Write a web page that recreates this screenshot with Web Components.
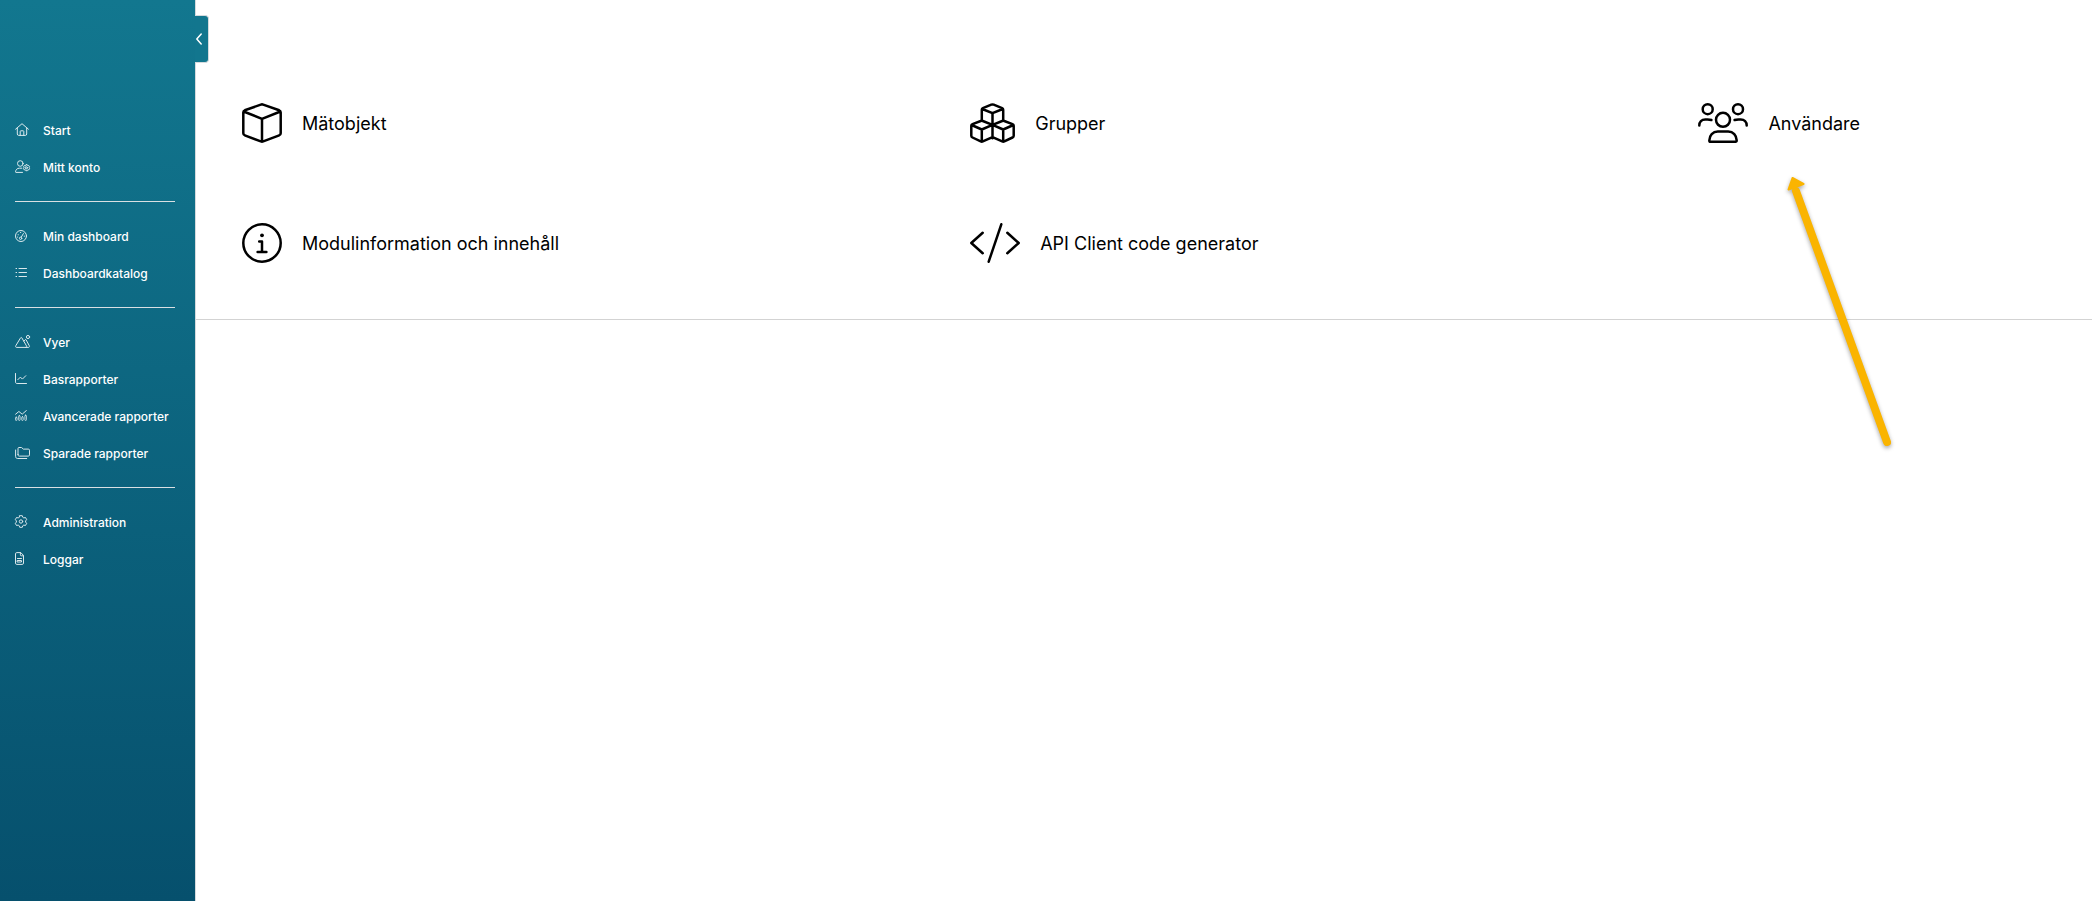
<!DOCTYPE html>
<html lang="sv">
<head>
<meta charset="utf-8">
<meta name="viewport" content="width=device-width, initial-scale=1">
<title>Administration</title>
<style>
  body {
    margin: 0;
    font-family: Inter, "Liberation Sans", sans-serif;
    color: #000;
    background: #fff;
  }
</style>
</head>
<body>
<admin-app></admin-app>

<script>
// width, height, stroke width, markup
const ICONS = {
  home: [14, 13, 1, '<path d="M.6 6.2 7 .7l6.400 5.500M2.300 5v6c0 .9.500 1.400 1.400 1.400h6.600c.9 0 1.400-.5 1.400-1.400V5M5.200 12.200V8.400c0-.4.200-.6.600-.6h2.400c.4 0 .6.200.6.600v3.800"/>'],
  account: [15, 13, 1, '<circle cx="5.3" cy="3.5" r="2.8"/><path d="M7.5 12.4H1c-.4 0-.6-.3-.5-.7.3-2 1.7-3.5 3.9-3.5h2.4"/><path d="m11.4 4.6 1 .2.4.9 1-.1.8 1.2-.5.9.5.9-.8 1.3-1-.1-.5.9h-1.5l-.5-.9-1 .1-.8-1.3.5-.9-.5-.9.8-1.2 1 .1z"/><circle cx="11.3" cy="7.8" r="1.1"/>'],
  gauge: [12, 12, 1, '<circle cx="6" cy="6" r="5.5"/><circle cx="5.6" cy="8.3" r="1.2"/><path d="M6.2 7.2 8.4 3.6M3.2 4.6v.3M5.5 2.500h.3M9.300 6v.4M2.600 7v.2"/>'],
  list: [12, 10, 1, '<path d="M4 .5h7.500M4 4.500h7.500M4 8.500h7.500M1 .5h.6M1 4.500h.6M1 8.500h.6"/>'],
  mountain: [15, 13, 1, '<circle cx="13" cy="2" r="1.6"/><path d="M5.6 2.8c.3-.5.9-.5 1.2 0l4.7 8.1c.4.8.1 1.5-.8 1.5H1.5c-.9 0-1.2-.7-.8-1.5zM9 6l1-1.2c.3-.4.8-.4 1.1 0l3.2 6c.4.8.1 1.6-.8 1.6h-3"/>'],
  chart: [12, 11, 1, '<path d="M.5.5v8.400c0 1 .5 1.600 1.600 1.600h9.400M2.800 6.700l2.600-2.600 2 2L10.800 2.700"/>'],
  bars: [12, 11, 0.8, '<path stroke-width="1" d="m.6 4.200 3.300-2.700 3.300 2.700L11.400.5"/><rect x=".5" y="7.200" width="1.500" height="3.300" rx=".7"/><rect x="3.600" y="5.700" width="1.500" height="4.800" rx=".7"/><rect x="6.700" y="6.700" width="1.500" height="3.800" rx=".7"/><rect x="9.900" y="5.200" width="1.500" height="5.300" rx=".7"/>'],
  folders: [15, 12, 1, '<path d="M3 7.7V1.5c0-.6.4-1 1-1h2.6l1.7 1.6h5c.8 0 1.2.4 1.2 1.1v4.7c0 .8-.4 1.2-1.2 1.2H4.200C3.400 9.100 3 8.500 3 7.700zM.6 3v6.400c0 1.300.8 2.100 2.100 2.100h9"/>'],
  gear: [12, 13, 1, '<path d="M4.700.7h2.600l.5 1.600 1 .6 1.700-.4 1.200 2.200-1.100 1.200v1.200l1.100 1.200-1.200 2.200-1.700-.4-1 .6-.5 1.600H4.700l-.5-1.600-1-.6-1.700.4L.3 8.300l1.100-1.200V5.900L.3 4.700l1.200-2.200 1.700.4 1-.6z"/><circle cx="6" cy="6.500" r="1.700"/>'],
  file: [9, 13, 1, '<path d="M5.400.6H1.800C1 .6.500 1 .500 1.900v9.200c0 .9.500 1.300 1.300 1.300h5.400c.8 0 1.300-.4 1.300-1.300V3.800zM5.400.6v2.200c0 .7.300 1 1 1h2M2.500 6.500h4M2.500 8.500h4v1.500h-4z"/>'],
  chevron: [6, 12, 1, '<path stroke-width="1.500" d="M5.200 1 .8 6l4.400 5"/>'],
  cube: [40, 40, 2.5, '<path d="M18.800 1.600c.8-.3 1.600-.3 2.400 0l16 5.700c1 .4 1.500 1 1.500 2.100v20.800c0 1.100-.5 1.800-1.500 2.100l-16 6.100c-.8.300-1.600.3-2.400 0l-16-6.100c-1-.3-1.500-1-1.500-2.100V9.400c0-1.100.5-1.700 1.500-2.100zM1.600 8.500 20 15.800l18.400-7.300M20 16v22.600"/>'],
  cubes: [45, 40, 2.5, '<path d="M11.800 17.600V6.800c0-.8.4-1.300 1.100-1.600l8.400-3.500c.8-.3 1.600-.3 2.400 0l8.400 3.500c.7.3 1.100.8 1.100 1.600v10.800M12.200 6l10.300 4.200L32.800 6M22.500 10.200v25M22.500 21.800 12.800 18c-.8-.3-1.300-.3-2.100 0L2.500 21.100c-.8.3-1.200.8-1.200 1.600v10c0 .9.400 1.400 1.200 1.800l8.200 3.900c.8.4 1.300.4 2.100 0l9.700-4.200 9.700 4.200c.8.400 1.300.4 2.100 0l8.200-3.900c.8-.4 1.200-.9 1.200-1.800v-10c0-.8-.4-1.300-1.200-1.600L34.300 18c-.8-.3-1.300-.3-2.100 0zM1.600 22l10.200 4.500 10.700-4.700 10.700 4.700L43.400 22M11.800 26.500v12M33.200 26.500v12"/>'],
  users: [50, 40, 2.5, '<circle cx="9.700" cy="6.200" r="5"/><circle cx="40" cy="6.200" r="5"/><circle cx="25" cy="16.800" r="7"/><path d="M1.300 22.500c0-3.600 2.300-6 6-6h2.200c1.500 0 2.800.1 3.900.5M48.700 22.500c0-3.600-2.300-6-6-6h-2.200c-1.500 0-2.800.1-3.900.5M19.800 28.600h10.400c5 0 8.400 3.900 8.500 8.800 0 .9-.4 1.300-1.200 1.300h-25c-.8 0-1.200-.4-1.200-1.300.1-4.900 3.500-8.800 8.500-8.800z"/>'],
  info: [40, 40, 2.5, '<circle cx="20" cy="20" r="18.700"/><circle cx="20" cy="12.300" r="1.900" fill="currentColor" stroke="none"/><path d="M17.200 18.600H20V29M15.600 29h8.800"/>'],
  code: [50, 40, 2.5, '<path d="M12.700 9.800 1.300 20l11.400 10.200M37.300 9.800 48.700 20 37.300 30.200M31.300 1.300 18.700 38.700"/>']
};

class AppIcon extends HTMLElement {
  constructor() {
    super();
    this.attachShadow({ mode: 'open' });
  }

  static get observedAttributes() {
    return ['name'];
  }

  attributeChangedCallback(name, oldValue, newValue) {
    const [width, height, stroke, shapes] = ICONS[newValue];
    this.shadowRoot.innerHTML = `
      <style>
        :host { display: block; flex: none; }
        svg { display: block; overflow: visible; }
      </style>
      <svg width="${width}" height="${height}" viewBox="0 0 ${width} ${height}" fill="none"
        stroke="currentColor" stroke-width="${stroke}" stroke-linecap="round"
        stroke-linejoin="round" aria-hidden="true">${shapes}</svg>
    `;
  }
}

class NavItem extends HTMLElement {
  constructor() {
    super();
    this.attachShadow({ mode: 'open' });
  }

  connectedCallback() {
    this.shadowRoot.innerHTML = `
      <style>
        :host { display: block; }
        a {
          display: flex;
          align-items: center;
          height: 37px;
          color: #fff;
          font-size: 12px;
          font-weight: 500;
          line-height: 16px;
          text-decoration: none;
          white-space: nowrap;
        }
        .icon { width: 28px; padding-bottom: 2px; opacity: 0.85; }
      </style>
      <a href="${this.getAttribute('href')}">
        <span class="icon"><app-icon name="${this.getAttribute('icon')}"></app-icon></span>
        <span><slot></slot></span>
      </a>
    `;
  }
}

class SideBar extends HTMLElement {
  constructor() {
    super();
    this.attachShadow({ mode: 'open' });
  }

  connectedCallback() {
    this.shadowRoot.innerHTML = `
      <style>
        :host {
          display: block;
          position: relative;
          box-sizing: border-box;
          width: 196px;
          padding: 112px 20px 24px 15px;
          border-right: 1px solid #d5dadd;
          background: linear-gradient(#12778f, #06506d);
        }
        /* handle that sticks out over the main area */
        button {
          position: absolute;
          top: 15px;
          left: 100%;
          display: flex;
          align-items: center;
          width: 14px;
          height: 48px;
          padding: 0 0 0 1px;
          border: 1px solid #d5dadd;
          border-left: 0;
          border-radius: 0 4px 4px 0;
          background: #12768e;
          color: #fff;
        }
      </style>
      <button type="button" aria-label="Dölj meny"><app-icon name="chevron"></app-icon></button>
      <nav><slot></slot></nav>
    `;
  }
}

class ModuleTile extends HTMLElement {
  constructor() {
    super();
    this.attachShadow({ mode: 'open' });
  }

  connectedCallback() {
    this.shadowRoot.innerHTML = `
      <style>
        :host { display: block; }
        a {
          display: flex;
          align-items: center;
          gap: 20px;
          color: #000;
          font-size: 18px;
          line-height: 24px;
          text-decoration: none;
          white-space: nowrap;
        }
        .label { padding-top: 2px; }
      </style>
      <a href="${this.getAttribute('href')}">
        <app-icon name="${this.getAttribute('icon')}"></app-icon>
        <span class="label"><slot></slot></span>
      </a>
    `;
  }
}

// Arrow drawn on top of the page, pointing at a tile
class PointerArrow extends HTMLElement {
  constructor() {
    super();
    this.attachShadow({ mode: 'open' });
  }

  connectedCallback() {
    this.shadowRoot.innerHTML = `
      <style>
        :host { display: block; pointer-events: none; }
        svg { display: block; overflow: visible; filter: drop-shadow(0 2px 2px rgba(0, 0, 0, 0.35)); }
      </style>
      <svg width="110" height="280" viewBox="0 0 110 280" aria-hidden="true">
        <path d="M12 16 103 267" fill="none" stroke="#fab400" stroke-width="8" stroke-linecap="round"/>
        <path d="M8.500 3 19.500 9 4.500 14.500z" fill="#fab400" stroke="#fab400" stroke-width="2" stroke-linejoin="round"/>
      </svg>
    `;
  }
}

class AdminApp extends HTMLElement {
  constructor() {
    super();
    this.attachShadow({ mode: 'open' });
  }

  connectedCallback() {
    this.shadowRoot.innerHTML = `
      <style>
        :host { display: flex; min-height: 100vh; }
        side-bar { flex: none; }
        main { flex: 1; min-width: 0; position: relative; }
        hr {
          height: 1px;
          margin: 15px 0 16px;
          border: 0;
          background: #d9e0e3;
        }
        .modules {
          display: grid;
          grid-template-columns: repeat(3, 1fr);
          gap: 80px 21.1%;
          padding: 103px 46px 56px;
          border-bottom: 1px solid #d3d3d3;
        }
        pointer-arrow { position: absolute; top: 175px; right: 198px; }
      </style>
      <side-bar>
        <nav-item href="#start" icon="home">Start</nav-item>
        <nav-item href="#konto" icon="account">Mitt konto</nav-item>
        <hr>
        <nav-item href="#dashboard" icon="gauge">Min dashboard</nav-item>
        <nav-item href="#katalog" icon="list">Dashboardkatalog</nav-item>
        <hr>
        <nav-item href="#vyer" icon="mountain">Vyer</nav-item>
        <nav-item href="#basrapporter" icon="chart">Basrapporter</nav-item>
        <nav-item href="#avancerade" icon="bars">Avancerade rapporter</nav-item>
        <nav-item href="#sparade" icon="folders">Sparade rapporter</nav-item>
        <hr>
        <nav-item href="#administration" icon="gear">Administration</nav-item>
        <nav-item href="#loggar" icon="file">Loggar</nav-item>
      </side-bar>
      <main>
        <div class="modules">
          <module-tile href="#matobjekt" icon="cube">Mätobjekt</module-tile>
          <module-tile href="#grupper" icon="cubes">Grupper</module-tile>
          <module-tile href="#anvandare" icon="users">Användare</module-tile>
          <module-tile href="#modulinformation" icon="info">Modulinformation och innehåll</module-tile>
          <module-tile href="#api" icon="code">API Client code generator</module-tile>
        </div>
        <pointer-arrow></pointer-arrow>
      </main>
    `;
  }
}

customElements.define('app-icon', AppIcon);
customElements.define('nav-item', NavItem);
customElements.define('side-bar', SideBar);
customElements.define('module-tile', ModuleTile);
customElements.define('pointer-arrow', PointerArrow);
customElements.define('admin-app', AdminApp);
</script>
</body>
</html>
